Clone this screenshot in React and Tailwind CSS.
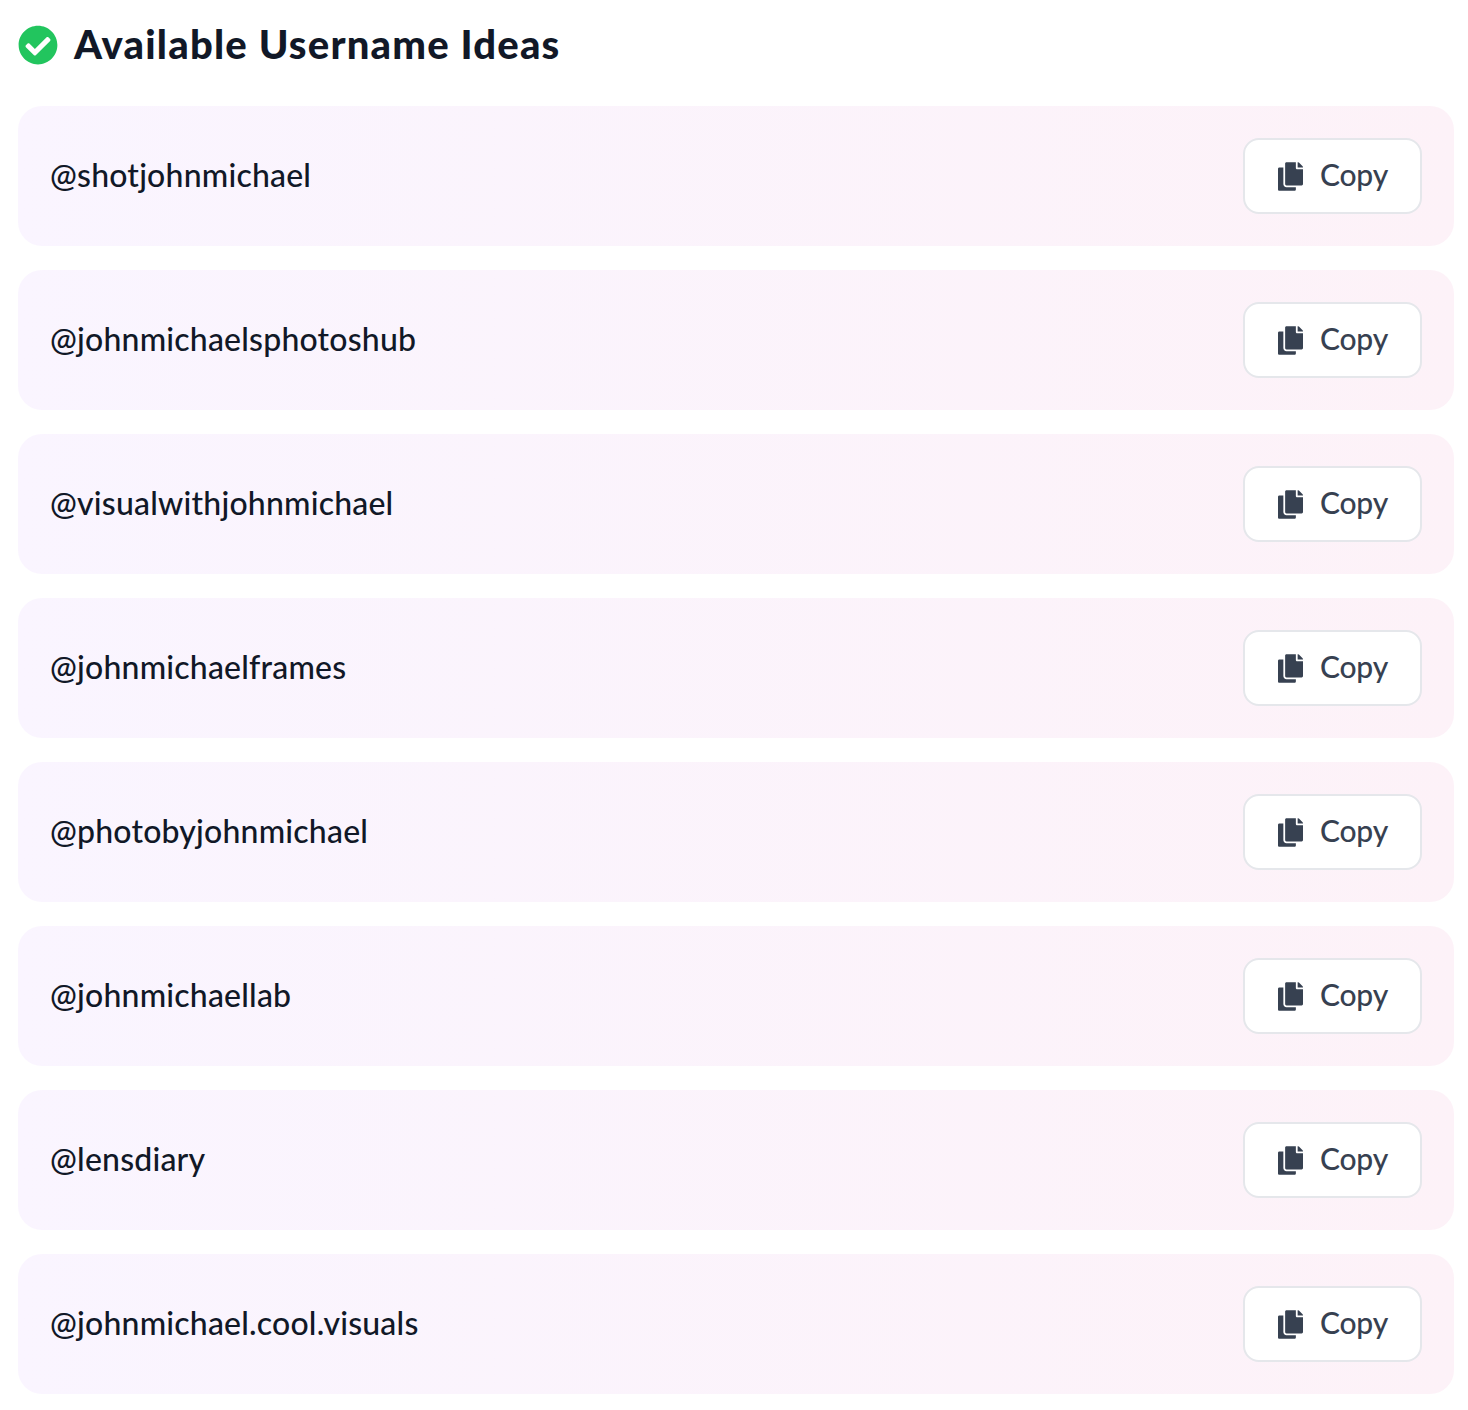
import React from "react";
import { FaCheckCircle, FaCopy } from "react-icons/fa";

const names = [
  "@shotjohnmichael",
  "@johnmichaelsphotoshub",
  "@visualwithjohnmichael",
  "@johnmichaelframes",
  "@photobyjohnmichael",
  "@johnmichaellab",
  "@lensdiary",
  "@johnmichael.cool.visuals",
];

export default function App() {
  return (
    <div className="min-h-[1410px] bg-white pl-[18px] pr-[14px] pt-[20px] pb-[16px] font-['Lato','Noto_Sans',sans-serif]">
      <div className="flex items-center gap-[16px] h-[50px] mb-[36px]">
        <FaCheckCircle className="w-[40px] h-[40px] text-[#22c55e]" />
        <h2 className="text-[40px] font-black tracking-[1.2px] leading-[46px] pb-[3px] text-[#111827]">Available Username Ideas</h2>
      </div>
      <div className="flex flex-col gap-[24px]">
        {names.map((n) => (
          <div key={n} className="flex items-center justify-between h-[140px] px-[32px] rounded-[24px] bg-gradient-to-r from-[#faf5ff] to-[#fdf2f8]">
            <span className="text-[32px] font-medium tracking-[0.2px] leading-[40px] pb-[3px] text-[#111827]">{n}</span>
            <button className="flex items-center gap-[17px] w-[179px] h-[76px] pl-[33px] rounded-[16px] border-2 border-[#e5e7eb] bg-white text-[#374151]">
              <FaCopy className="w-[25px] h-[29px]" />
              <span className="text-[30px] font-medium tracking-[-0.2px] leading-[36px] pb-[5px]">Copy</span>
            </button>
          </div>
        ))}
      </div>
    </div>
  );
}
